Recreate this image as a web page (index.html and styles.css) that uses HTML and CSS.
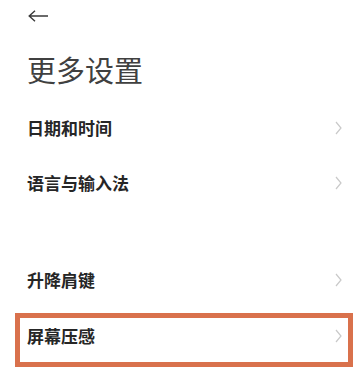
FILE: index.html
```html
<!DOCTYPE html>
<html lang="zh-CN">
<head>
<meta charset="utf-8">
<link rel="stylesheet" href="styles.css">
</head>
<body>
<div class="page">
  <div class="back">
    <svg width="20" height="12" viewBox="0 0 20 12"><path d="M1.2 6 H20 M7 0.7 L1.2 6 L7 11.3" fill="none" stroke="#3a3a3a" stroke-width="1.4"/></svg>
  </div>
  <h1 class="title">更多设置</h1>
  <div class="row"><span class="label">日期和时间</span><svg class="chev" width="7" height="14" viewBox="0 0 7 14"><path d="M1 1 L6 7 L1 13" fill="none" stroke="#c9c9c9" stroke-width="1.2"/></svg></div>
  <div class="row"><span class="label">语言与输入法</span><svg class="chev" width="7" height="14" viewBox="0 0 7 14"><path d="M1 1 L6 7 L1 13" fill="none" stroke="#c9c9c9" stroke-width="1.2"/></svg></div>
  <div class="spacer"></div>
  <div class="row"><span class="label">升降肩键</span><svg class="chev" width="7" height="14" viewBox="0 0 7 14"><path d="M1 1 L6 7 L1 13" fill="none" stroke="#c9c9c9" stroke-width="1.2"/></svg></div>
  <div class="row boxed"><span class="label">屏幕压感</span><svg class="chev" width="7" height="14" viewBox="0 0 7 14"><path d="M1 1 L6 7 L1 13" fill="none" stroke="#c9c9c9" stroke-width="1.2"/></svg></div>
</div>
</body>
</html>
```
FILE: styles.css
```css
html, body {
  margin: 0;
  padding: 0;
  background: #ffffff;
}
body {
  font-family: "Noto Sans CJK SC", "Noto Sans", sans-serif;
  color: #222;
}
.page {
  padding: 0 20px 0 27px;
}
.back {
  padding-top: 10px;
  padding-left: 1px;
  height: 12px;
}
.back svg {
  display: block;
}
.title {
  margin: 27px 0 11px 0;
  height: 40px;
  line-height: 40px;
  font-size: 29px;
  font-weight: 400;
  color: #404040;
}
.row {
  height: 55px;
  display: flex;
  align-items: center;
  justify-content: space-between;
}
.label {
  font-size: 17px;
  font-weight: 700;
  color: #262626;
  line-height: 1;
}
.chev {
  display: block;
}
.spacer {
  height: 42px;
}
.boxed {
  box-sizing: border-box;
  height: 54px;
  margin: 6px -11px 0 -12px;
  padding: 0 6px 9px 7px;
  border: 5px solid #d9714c;
}
```
